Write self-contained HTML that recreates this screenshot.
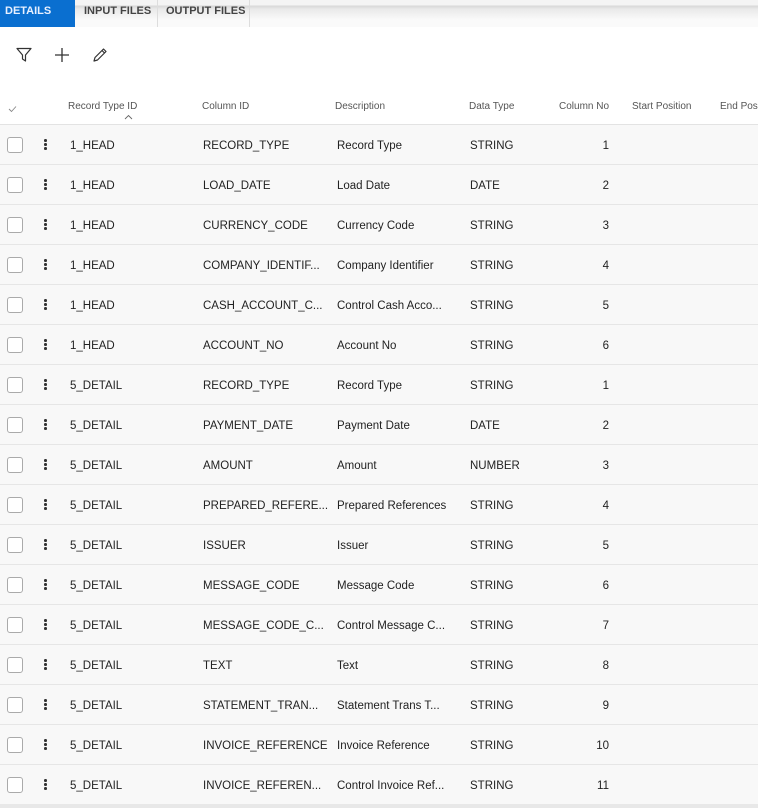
<!DOCTYPE html>
<html><head><style>
body{margin:0;width:758px;height:808px;overflow:hidden;background:#fff;font-family:"Liberation Sans",sans-serif;position:relative}
.top{position:absolute;left:0;top:0;width:758px;height:27px;background:linear-gradient(#f4f4f4 0,#f4f4f4 5px,#d8d8d8 6px,#e9e9e9 9px,#fafafa 20px,#fafafa 27px)}
.tab{position:absolute;top:0;height:27px;font-size:11px;font-weight:bold;color:#444;line-height:22px;box-sizing:border-box}
.hdr{position:absolute;top:101px;font-size:10px;color:#555}
.row{position:absolute;left:0;width:758px;height:39px;background:#f8f8f8;border-bottom:1px solid #e6e6e6;font-size:11.5px;color:#222}
.row span{position:absolute;top:14.5px;white-space:nowrap}
.cb{position:absolute;left:7px;top:12px;width:14px;height:14px;border:1px solid #aaa;border-radius:3px;background:#fff}
.dots{position:absolute;left:44px;top:14px;width:3px}
.dots i{display:block;width:2.5px;height:2.5px;background:#333;border-radius:50%;margin-bottom:1.6px}
</style></head><body>
<div class="top"></div>
<div class="tab" style="left:0;width:75px;background:#0a6fd0;color:#e8f0ff;padding-left:5px;height:27px">DETAILS</div>
<div class="tab" style="left:75px;width:83px;border-right:1px solid #ddd;padding-left:9px">INPUT FILES</div>
<div class="tab" style="left:158px;width:92px;border-right:1px solid #ddd;padding-left:8px">OUTPUT FILES</div>
<svg style="position:absolute;left:15px;top:46px" width="18" height="18" viewBox="0 0 18 18"><path d="M2 2.5H16L10.5 9V15L7.5 13V9Z" fill="none" stroke="#333" stroke-width="1.2" stroke-linejoin="round"/></svg>
<svg style="position:absolute;left:53px;top:46px" width="18" height="18" viewBox="0 0 18 18"><path d="M9 2V16M2 9H16" stroke="#333" stroke-width="1.3"/></svg>
<svg style="position:absolute;left:91px;top:46px" width="18" height="18" viewBox="0 0 18 18"><path d="M3 15L4 11.5L12.5 3L15 5.5L6.5 14Z M11 4.5L13.5 7" fill="none" stroke="#333" stroke-width="1.2" stroke-linejoin="round"/></svg>
<svg style="position:absolute;left:8px;top:105px" width="10" height="8"><path d="M1 4L3.5 6.5L8 1.5" fill="none" stroke="#888" stroke-width="0.9"/></svg>
<div class="hdr" style="left:68px">Record Type ID</div>
<svg style="position:absolute;left:124px;top:114px" width="9" height="6"><path d="M1 5L4.5 1.5L8 5" fill="none" stroke="#666" stroke-width="0.9"/></svg>
<div class="hdr" style="left:202px">Column ID</div>
<div class="hdr" style="left:335px">Description</div>
<div class="hdr" style="left:469px">Data Type</div>
<div class="hdr" style="left:559px">Column No</div>
<div class="hdr" style="left:632px">Start Position</div>
<div class="hdr" style="left:720px">End Pos</div>
<div style="position:absolute;left:0;top:124px;width:758px;height:1px;background:#e3e3e3"></div>
<div id="rows"></div>
<div style="position:absolute;left:0;top:804px;width:758px;height:4px;background:#e8e8e8"></div>
<script>
var d=[["1_HEAD","RECORD_TYPE","Record Type","STRING",1],["1_HEAD","LOAD_DATE","Load Date","DATE",2],["1_HEAD","CURRENCY_CODE","Currency Code","STRING",3],["1_HEAD","COMPANY_IDENTIF...","Company Identifier","STRING",4],["1_HEAD","CASH_ACCOUNT_C...","Control Cash Acco...","STRING",5],["1_HEAD","ACCOUNT_NO","Account No","STRING",6],["5_DETAIL","RECORD_TYPE","Record Type","STRING",1],["5_DETAIL","PAYMENT_DATE","Payment Date","DATE",2],["5_DETAIL","AMOUNT","Amount","NUMBER",3],["5_DETAIL","PREPARED_REFERE...","Prepared References","STRING",4],["5_DETAIL","ISSUER","Issuer","STRING",5],["5_DETAIL","MESSAGE_CODE","Message Code","STRING",6],["5_DETAIL","MESSAGE_CODE_C...","Control Message C...","STRING",7],["5_DETAIL","TEXT","Text","STRING",8],["5_DETAIL","STATEMENT_TRAN...","Statement Trans T...","STRING",9],["5_DETAIL","INVOICE_REFERENCE","Invoice Reference","STRING",10],["5_DETAIL","INVOICE_REFEREN...","Control Invoice Ref...","STRING",11]];
var h="";d.forEach(function(r,i){h+='<div class="row" style="top:'+(125+i*40)+'px"><div class="cb"></div><div class="dots"><i></i><i></i><i></i></div><span style="left:70px">'+r[0]+'</span><span style="left:203px">'+r[1]+'</span><span style="left:337px">'+r[2]+'</span><span style="left:470px">'+r[3]+'</span><span style="right:149px">'+r[4]+'</span></div>'});
document.getElementById("rows").innerHTML=h;
</script>
</body></html>
